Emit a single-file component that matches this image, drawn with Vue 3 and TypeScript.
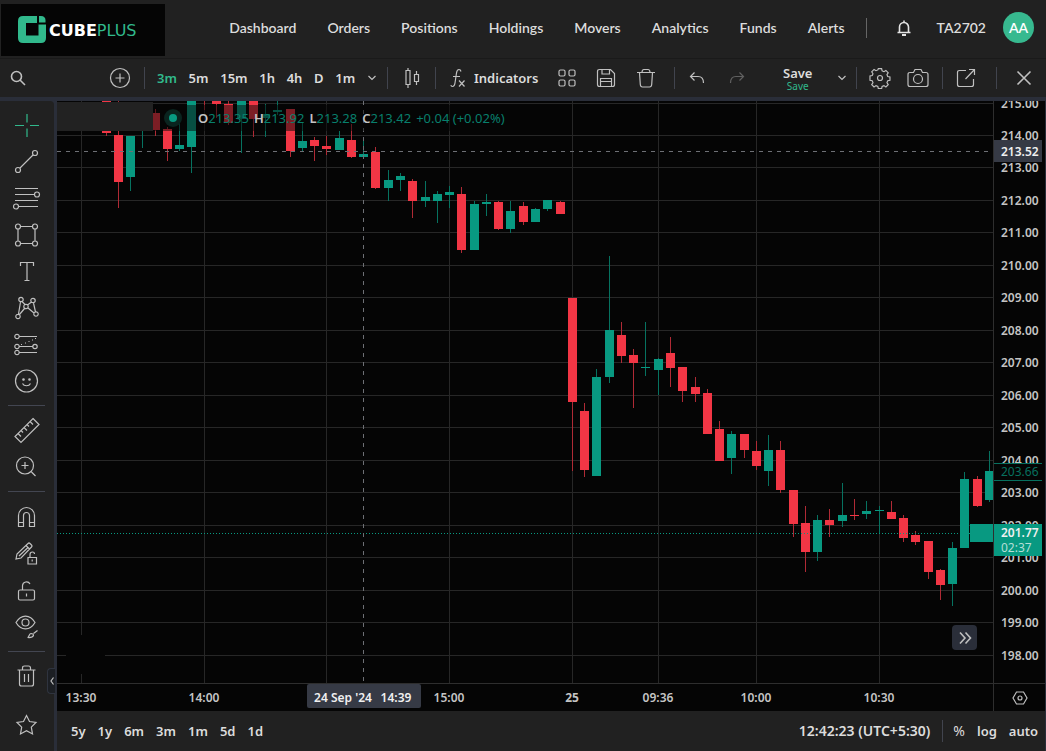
<script setup lang="ts">
import { ref } from 'vue'

type Dir = 'up' | 'down'
type Candle = [index: number, dir: Dir, high: number, top: number, bottom: number, low: number]

const circle = (x: number, y: number, r: number): string =>
  `M${x - r} ${y}a${r} ${r} 0 1 0 ${2 * r} 0a${r} ${r} 0 1 0 ${-2 * r} 0`

const navItems = ['Dashboard', 'Orders', 'Positions', 'Holdings', 'Movers', 'Analytics', 'Funds', 'Alerts']
const intervals = ['3m', '5m', '15m', '1h', '4h', 'D', '1m']
const ranges = ['5y', '1y', '6m', '3m', '1m', '5d', '1d']
const activeInterval = ref('3m')

interface Tool { name: string; d: string }
const toolGroups: Tool[][] = [
  [
    { name: 'Crosshair', d: 'M2 14.500h9M17 14.500h9M14 3v8.500M14 17.500v8.500' },
    { name: 'Trend line', d: circle(5, 22, 2.5) + circle(22, 5, 2.5) + 'M7 20L20 7' },
    { name: 'Fib retracement', d: 'M2 4.5h23M2 10.5h19.500M2 16.500h23M5.500 22.500h19.500' + circle(24, 10.5, 2.5) + circle(3, 22.5, 2.5) },
    { name: 'Shapes', d: circle(5, 5.5, 2.5) + circle(22, 5.5, 2.5) + circle(5, 22.5, 2.5) + circle(22, 22.5, 2.5) + 'M7.500 5.500h12M7.500 22.500h12M5 8v12M22 8v12' },
    { name: 'Text', d: 'M7.500 9V5.500h13V9M14 5.500v18M11.500 23.500h5' },
    { name: 'Patterns', d: circle(8, 5.5, 2.2) + circle(20, 6.5, 2.2) + circle(13, 12.5, 2.2) + circle(5, 22.5, 2.2) + circle(23, 20, 2.2) + 'M7.500 8L5.500 20M9 7.500l3 3M14.500 11l4-3M20.500 9l2 9M15 14l6 5M11.500 14.500L6.500 20.500' },
    { name: 'Projection', d: circle(4, 6.5, 2.2) + circle(4, 16.5, 2.2) + circle(22, 16.5, 2.2) + circle(4, 22.5, 2.2) + 'M6.500 6.500h17.500M6.500 16.500h13M6.500 22.500h17.500M8 14.500h1M12 13h1M15.500 11.500h1M19 10h1M22 8.500h1' },
    { name: 'Emoji', d: circle(13.5, 14, 11) + circle(10.5, 12.5, 0.7) + circle(16.5, 12.5, 0.7) + 'M9.500 16.500c1.500 3 6.500 3 8 0' },
  ],
  [
    { name: 'Measure', d: 'M20 2.500l6 6L8 26.500l-6-6zM17 5.500l3 3M14 8.500l2 2M11 11.500l3 3M8 14.500l2 2M5 17.500l3 3' },
    { name: 'Zoom in', d: circle(12, 12.5, 8.5) + 'M18.500 19l4 4M12 9v7M8.500 12.500h7' },
  ],
  [
    { name: 'Magnet', d: 'M5.500 23.500V12.500a8 8 0 0 1 16 0v11h-5V12.500a3 3 0 0 0-6 0v11zM5.500 19.500h5M16.500 19.500h5' },
    { name: 'Keep drawing', d: 'M3 19l1-5L15 3.500q1-1 2 0l1.500 1.500q1 1 0 2L8 18zM13 5.500l3.500 3.500M6 16L15 7.500M15 17.500h8.500v6.500H15zM17 17.500v-3q0-2.500 2.500-2.500q2 0 2 2M19.200 19.500v2' },
    { name: 'Lock drawings', d: 'M7 14h13q1.500 0 1.500 1.500v7q0 1.500-1.500 1.500H7q-1.500 0-1.500-1.500v-7q0-1.500 1.500-1.500zM9.500 14V9.500a4 4 0 0 1 7.500-1.500M13.500 17.500v3' },
    { name: 'Hide drawings', d: 'M3 9.500C8 1 17 1 22 9.500C17 18 8 18 3 9.500z' + circle(12.5, 9.5, 3.5) + 'M14.500 24.500c2 0 1-3.500 3.500-4q2.500 0 2.500 2q-1 2.500-6 2M20.500 20.500l4-3' },
  ],
]
const trashPath = 'M4.500 8h18M6.500 8v14q0 2 2 2h10q2 0 2-2V8M9.500 8V6q0-2 2-2h4q2 0 2 2v2M11.500 12v8M15.500 12v8'
const starPath = 'M13.500 4.500l3 6 6.500 1-4.700 4.700 1.200 6.800-6-3.200-6 3.200 1.200-6.800L4 11.500l6.500-1z'

/* Plot geometry: one bar every 12.27px, one rupee every 32.5px */
const barX = (i: number): number => Math.round(24 + i * 12.27)
const priceY = (p: number): number => Math.round(34 + (214 - p) * 32.48)
const prices = Array.from({ length: 18 }, (_, i) => 215 - i)
const timeMarks: { i: number; label: string; bold?: boolean }[] = [
  { i: 0, label: '13:30' },
  { i: 10, label: '14:00' },
  { i: 20, label: '' },
  { i: 30, label: '15:00' },
  { i: 40, label: '25', bold: true },
  { i: 47, label: '09:36' },
  { i: 55, label: '10:00' },
  { i: 65, label: '10:30' },
]

const candles: Candle[] = [
  [2, 'down', 0, 0, 32, 35], [3, 'down', 0, 34, 81, 107], [4, 'up', 35, 35, 76, 90], [5, 'up', 14, 14, 22, 47],
  [6, 'down', 8, 12, 29, 35], [7, 'down', 26, 28, 48, 60], [8, 'up', 17, 44, 48, 50], [9, 'up', 0, 0, 46, 72],
  [10, 'down', 0, 0, 0, 9], [11, 'down', 0, 0, 3, 17], [12, 'down', 0, 3, 22, 24], [13, 'up', 0, 0, 18, 52],
  [14, 'down', 0, 0, 18, 36], [15, 'up', 3, 13, 17, 36], [16, 'up', 0, 9, 11, 14], [17, 'down', 8, 8, 50, 56],
  [18, 'up', 21, 40, 47, 50], [19, 'down', 36, 39, 45, 60], [20, 'down', 35, 45, 48, 54], [21, 'up', 30, 37, 49, 49],
  [22, 'down', 23, 39, 56, 57], [23, 'up', 40, 53, 56, 56], [24, 'down', 46, 51, 87, 88], [25, 'up', 69, 79, 87, 100],
  [26, 'up', 72, 75, 79, 90], [27, 'down', 78, 80, 100, 117], [28, 'up', 80, 96, 100, 106], [29, 'up', 90, 93, 100, 122],
  [30, 'up', 85, 91, 94, 107], [31, 'down', 86, 93, 149, 152], [32, 'up', 100, 103, 149, 149], [33, 'up', 93, 101, 103, 115],
  [34, 'down', 100, 101, 128, 129], [35, 'up', 100, 110, 128, 132], [36, 'down', 101, 105, 121, 124], [37, 'up', 107, 108, 121, 121],
  [38, 'up', 99, 99, 108, 110], [39, 'down', 100, 101, 113, 113], [40, 'down', 197, 197, 301, 370], [41, 'down', 302, 310, 369, 376],
  [42, 'up', 268, 276, 375, 375], [43, 'up', 155, 229, 276, 282], [44, 'down', 221, 234, 255, 262], [45, 'down', 248, 254, 262, 307],
  [46, 'up', 221, 266, 267, 275], [47, 'up', 257, 258, 269, 294], [48, 'down', 236, 252, 267, 286], [49, 'down', 266, 266, 290, 301],
  [50, 'down', 276, 286, 293, 301], [51, 'down', 288, 292, 333, 333], [52, 'down', 320, 328, 360, 360], [53, 'up', 330, 333, 357, 373],
  [54, 'down', 333, 333, 349, 357], [55, 'down', 340, 350, 365, 369], [56, 'up', 334, 349, 370, 385], [57, 'down', 340, 349, 389, 392],
  [58, 'down', 389, 389, 423, 436], [59, 'down', 405, 422, 451, 471], [60, 'up', 414, 419, 451, 460], [61, 'down', 408, 419, 424, 436],
  [62, 'up', 382, 414, 420, 426], [63, 'down', 398, 414, 415, 419], [64, 'up', 400, 410, 413, 418], [65, 'up', 405, 409, 410, 432],
  [66, 'down', 400, 411, 418, 418], [67, 'down', 414, 417, 437, 441], [68, 'down', 430, 434, 441, 444], [69, 'down', 440, 440, 471, 478],
  [70, 'down', 468, 469, 484, 499], [71, 'up', 441, 447, 483, 505], [72, 'up', 371, 378, 447, 447], [73, 'down', 375, 378, 405, 406],
  [74, 'up', 350, 370, 399, 401],
]
</script>

<template>
  <div class="app">
    <header class="header">
      <a class="logo" href="#" aria-label="CubePlus home">
        <svg width="28" height="28" viewBox="0 0 28 28" aria-hidden="true">
          <path fill="#31b98c" fill-rule="evenodd" d="M5 0h14v7H8v12.500h12.500V8.500H28V22q0 5-5 5H5q-5 0-5-5V5q0-5 5-5z" />
          <path fill="#31b98c" d="M21 0h2q4.500 0 4.500 4.500V6.500H21z" />
        </svg>
        <span class="word"><b>CUBE</b>PLUS</span>
      </a>
      <nav class="nav">
        <a v-for="item in navItems" :key="item" href="#">{{ item }}</a>
      </nav>
      <span class="head-sep"></span>
      <button class="bell" aria-label="Notifications">
        <svg width="16" height="18" viewBox="0 0 16 18" fill="none" stroke="#e4e4e4" stroke-width="1.600">
          <path d="M1.500 13.500h13M3.500 13V8a4.500 4.500 0 0 1 9 0v5M8 1.500v2" />
          <path d="M6 16h4" stroke-width="2" />
        </svg>
      </button>
      <span class="user">TA2702</span>
      <button class="avatar">AA</button>
    </header>

    <div class="toolbar">
      <div class="sec sec-search">
        <button aria-label="Symbol search">
          <svg width="16" height="16" viewBox="0 0 16 16" class="ico thick"><path :d="circle(6.500, 6.500, 5) + 'M10.500 10.500l4.500 4.500'" /></svg>
        </button>
        <button aria-label="Compare symbol">
          <svg width="22" height="22" viewBox="0 0 22 22" class="ico"><path :d="circle(11, 11, 9.500) + 'M11 6.500v9M6.500 11h9'" /></svg>
        </button>
      </div>
      <div class="sec sec-intervals">
        <button
          v-for="t in intervals"
          :key="t"
          :class="{ active: t === activeInterval }"
          @click="activeInterval = t"
        >{{ t }}</button>
        <button aria-label="More intervals">
          <svg width="10" height="6" viewBox="0 0 10 6" class="ico"><path d="M1.500 1L5 4.500 8.500 1" /></svg>
        </button>
      </div>
      <div class="sec sec-type">
        <button aria-label="Chart type">
          <svg width="16" height="22" viewBox="0 0 16 22" class="ico"><path d="M2 3.500h4v14H2zM4 1v2.500M4 17.500V21M10.500 7.500h4v7h-4zM12.500 4v3.500M12.500 14.500V18" /></svg>
        </button>
      </div>
      <div class="sec sec-indicators">
        <button class="indicators">
          <svg width="16" height="20" viewBox="0 0 16 20" class="ico"><path d="M11 3.500Q10.500 1.500 9 1.500Q7 1.500 6.500 5L5 15Q4.500 18.500 2.500 18.500Q1 18.500 1 17M3 8.500h7M9 12.500l5.500 6M14.500 12.500L9 18.500" /></svg>
          Indicators
        </button>
        <button aria-label="Templates">
          <svg width="18" height="18" viewBox="0 0 18 18" class="ico">
            <rect x="1" y="1" width="6" height="6" rx="1.500" /><rect x="11" y="1" width="6" height="6" rx="1.500" />
            <rect x="1" y="11" width="6" height="6" rx="1.500" /><rect x="11" y="11" width="6" height="6" rx="1.500" />
          </svg>
        </button>
        <button aria-label="Save layout">
          <svg width="20" height="20" viewBox="0 0 20 20" class="ico"><path d="M3.500 1.500h11l4 4v11q0 2-2 2h-13q-2 0-2-2v-13q0-2 2-2zM6 1.500v4.500h7.500V1.500M4.500 18.500V10.500h11v8M4.500 13.500h11" /></svg>
        </button>
        <button aria-label="Remove all">
          <svg width="20" height="20" viewBox="0 0 20 20" class="ico"><path d="M1 4.500h18M6 4.500q0-3 2-3h4q2 0 2 3M3.500 4.500l.800 12q.2 2.500 2.200 2.500h7q2 0 2.200-2.500l.800-12" /></svg>
        </button>
      </div>
      <div class="sec sec-history">
        <button aria-label="Undo">
          <svg width="16" height="14" viewBox="0 0 16 14" class="ico"><path d="M5.500 1.500L1.500 5.500l4 4M1.500 5.500H9q5.500 0 5.500 6.500" /></svg>
        </button>
        <button aria-label="Redo" disabled>
          <svg width="16" height="14" viewBox="0 0 16 14" class="ico"><path d="M10.500 1.500l4 4-4 4M14.500 5.500H7q-5.500 0-5.500 6.500" /></svg>
        </button>
      </div>
      <div class="sec sec-save">
        <button class="save">Save<small>Save</small></button>
        <button aria-label="Manage layouts">
          <svg width="10" height="6" viewBox="0 0 10 6" class="ico"><path d="M1.500 1L5 4.500 8.500 1" /></svg>
        </button>
      </div>
      <div class="sec sec-view">
        <button aria-label="Settings">
          <svg width="22" height="22" viewBox="0 0 22 22" class="ico">
            <path d="M9.300 1.500h3.400l.5 2.300 1.900.8 2-1.300 2.400 2.400-1.300 2 .8 1.900 2.300.5v3.400l-2.300.5-.8 1.900 1.300 2-2.400 2.400-2-1.300-1.900.8-.5 2.300H9.300l-.5-2.300-1.900-.8-2 1.300-2.400-2.400 1.300-2-.8-1.900-2.300-.5V9.100L3 8.600l.8-1.900-1.300-2 2.400-2.400 2 1.300 1.900-.8z" transform="translate(.3 .2) scale(.97)" />
            <path :d="circle(11, 11, 2.500)" />
          </svg>
        </button>
        <button aria-label="Snapshot">
          <svg width="22" height="20" viewBox="0 0 22 20" class="ico"><path :d="'M3 4.500h3.500l1.500-3h6l1.500 3H19q2 0 2 2v10q0 2-2 2H3q-2 0-2-2v-10q0-2 2-2z' + circle(11, 11, 4.500)" /></svg>
        </button>
      </div>
      <div class="sec sec-open">
        <button aria-label="Open in new window">
          <svg width="20" height="20" viewBox="0 0 20 20" class="ico"><path d="M10 2.500H3.500q-2 0-2 2v12q0 2 2 2h12q2 0 2-2V11M13 1.500h5.500V7M18.500 1.500L9.500 11" /></svg>
        </button>
      </div>
      <div class="sec sec-close">
        <button aria-label="Close">
          <svg width="16" height="16" viewBox="0 0 16 16" class="ico thick"><path d="M1.500 1.500l13 13M14.500 1.500l-13 13" /></svg>
        </button>
      </div>
    </div>

    <div class="main">
      <aside class="sidebar">
        <div v-for="(group, g) in toolGroups" :key="g" class="group">
          <button v-for="(tool, k) in group" :key="tool.name" :aria-label="tool.name" :class="{ active: g === 0 && k === 0 }">
            <svg width="28" height="28" viewBox="0 0 28 28" class="ico"><path :d="tool.d" /></svg>
          </button>
        </div>
        <div class="group last">
          <button aria-label="Remove objects"><svg width="28" height="28" viewBox="0 0 28 28" class="ico"><path :d="trashPath" /></svg></button>
          <button aria-label="Favorites"><svg width="28" height="28" viewBox="0 0 28 28" class="ico"><path :d="starPath" /></svg></button>
        </div>
        <button class="collapse" aria-label="Hide toolbar">
          <svg width="4" height="8" viewBox="0 0 4 8" class="ico"><path d="M3.500 .5L1 4l2.500 3.500" /></svg>
        </button>
      </aside>

      <section class="chart">
        <div class="plot">
          <svg class="canvas" shape-rendering="crispEdges">
            <rect v-for="p in prices" :key="p" class="grid" x="0" :y="priceY(p)" width="100%" height="1" />
            <rect v-for="m in timeMarks" :key="m.i" class="grid" :x="barX(m.i)" y="0" width="1" height="100%" />
            <rect x="9" y="534" width="39" height="39" fill="#050505" />
            <g v-for="c in candles" :key="c[0]" :class="c[1]">
              <rect class="wick" :x="barX(c[0])" :y="c[2]" width="1" :height="c[5] - c[2]" />
              <rect class="body" :x="barX(c[0]) - 4" :y="c[3]" width="9" :height="c[4] - c[3]" />
            </g>
            <rect x="913" y="423" width="23" height="18" fill="#089981" />
            <line class="last-line" x1="0" y1="432" x2="100%" y2="432" />
            <line class="cross" x1="0" y1="50.500" x2="100%" y2="50.500" />
            <line class="cross" x1="306.500" y1="0" x2="306.500" y2="100%" />
          </svg>
          <div class="legend">
            <span class="legend-name"></span>
            <div class="legend-values">
              <span class="status"><i></i></span>
              <span><b>O</b>213.35</span>
              <span><b>H</b>213.92</span>
              <span><b>L</b>213.28</span>
              <span><b>C</b>213.42</span>
              <span>+0.04 (+0.02%)</span>
            </div>
          </div>
          <button class="scroll-end" aria-label="Scroll to latest bar">
            <svg width="14" height="14" viewBox="0 0 14 14" class="ico thick"><path d="M2 1.500L7 7l-5 5.500M7.500 1.500L12.500 7l-5 5.500" /></svg>
          </button>
        </div>
        <svg class="price-axis">
          <text v-for="p in prices" :key="p" x="7" :y="priceY(p) + 5">{{ p.toFixed(2) }}</text>
          <rect x="0" y="39" width="48" height="22" fill="#363a45" />
          <text x="7" y="55" class="lit">213.52</text>
          <rect x="0" y="362" width="48" height="18" fill="#050505" />
          <path d="M0 362.500h48M0 379.500h48" stroke="#07705f" />
          <text x="7" y="375" class="high">203.66</text>
          <rect x="0" y="423" width="48" height="32" fill="#089981" />
          <text x="7" y="436" class="lit">201.77</text>
          <text x="7" y="451" class="count">02:37</text>
        </svg>
        <svg class="time-axis">
          <text
            v-for="m in timeMarks"
            :key="m.i"
            :x="barX(m.i)"
            y="18"
            :class="{ strong: m.bold }"
          >{{ m.label }}</text>
          <rect x="250" y="0" width="114" height="24" rx="2" fill="#363a45" />
          <text x="286" y="18" class="lit">24 Sep '24</text>
          <text x="339" y="18" class="lit">14:39</text>
        </svg>
        <button class="axis-settings" aria-label="Axis settings">
          <svg width="16" height="14" viewBox="0 0 16 14" class="ico"><path :d="'M4.500 1h7L15 7l-3.500 6h-7L1 7z' + circle(8, 7, 2)" /></svg>
        </button>
        <footer class="bottom">
          <button v-for="r in ranges" :key="r">{{ r }}</button>
          <button class="clock">12:42:23 (UTC+5:30)</button>
          <span class="foot-sep"></span>
          <button class="percent">%</button>
          <button>log</button>
          <button>auto</button>
        </footer>
      </section>
    </div>
  </div>
</template>

<style>
body {
  margin: 0;
  background: #212121;
}
</style>

<style scoped>
.app {
  display: flex;
  flex-direction: column;
  min-height: 100vh;
  background: #2a2e39;
  color: #dcdcdc;
  font: 600 13px/16px 'Noto Sans', 'Open Sans', sans-serif;
}
button {
  padding: 0;
  border: 0;
  background: none;
  color: inherit;
  font: inherit;
  cursor: pointer;
}
a {
  color: inherit;
  text-decoration: none;
}
svg {
  display: block;
}
.ico {
  fill: none;
  stroke: #c0c0c0;
  stroke-width: 1.2;
}
.thick {
  stroke-width: 1.6;
}
.header {
  display: flex;
  align-items: center;
  box-sizing: border-box;
  height: 59px;
  padding: 0 12px 3px 1px;
  background: #212121;
  border-bottom: 1px solid #1a1a1a;
  font: 600 14px/18px Lato, 'Open Sans', sans-serif;
}
.logo {
  display: flex;
  align-items: center;
  gap: 3px;
  align-self: flex-end;
  box-sizing: border-box;
  width: 164px;
  height: 52px;
  margin-bottom: -1px;
  padding-left: 17px;
  background: #050505;
}
.word {
  padding-top: 2px;
  color: #31b98c;
  font: 16px/20px 'DejaVu Sans', sans-serif;
}
.word b {
  color: #fff;
}
.nav {
  display: flex;
  gap: 31px;
  margin-left: auto;
}
.head-sep {
  width: 1px;
  height: 20px;
  margin: 0 29px 0 21px;
  background: #666;
}
.user {
  margin: 0 17px 0 25px;
}
.avatar {
  width: 31px;
  height: 31px;
  border-radius: 50%;
  background: #37b98f;
  color: #fff;
}
.toolbar {
  display: flex;
  height: 38px;
  background: #212121;
}
.sec {
  display: flex;
  align-items: center;
  justify-content: space-between;
  box-sizing: border-box;
  position: relative;
}
.sec:not(:last-child)::after {
  content: '';
  position: absolute;
  right: 0;
  top: 8px;
  width: 1px;
  height: 22px;
  background: #41444e;
}
.sec-history::after {
  display: none;
}
.sec-search {
  width: 145px;
  padding: 0 14px 0 10px;
}
.sec-intervals {
  width: 243px;
  padding: 0 11px 0 12px;
}
.sec-type {
  width: 48px;
  justify-content: center;
}
.sec-indicators {
  width: 239px;
  padding: 0 19px 0 14px;
}
.indicators {
  display: flex;
  align-items: center;
  gap: 8px;
}
.sec-history {
  width: 70px;
  padding-left: 14px;
}
.sec-save {
  width: 74px;
  margin-left: auto;
  padding-right: 10px;
}
.save small {
  display: block;
  color: #31b98c;
  font: 10px/10px 'Noto Sans', sans-serif;
}
.sec-view {
  width: 86px;
  padding: 0 14px 0 12px;
}
.sec-open {
  width: 54px;
  padding-left: 13px;
}
.sec-close {
  width: 49px;
  padding-left: 19px;
}
button:disabled {
  opacity: 0.4;
}
.toolbar .active {
  color: #31b98c;
}
.main {
  display: flex;
  flex: 1;
  gap: 3px;
  margin-top: 4px;
}
.sidebar {
  position: relative;
  width: 54px;
  padding-top: 6px;
  box-sizing: border-box;
  background: #212121;
  border-top-right-radius: 4px;
}
.group {
  position: relative;
  display: flex;
  flex-direction: column;
  margin-bottom: 13px;
}
.group:nth-child(2) {
  margin-bottom: 14px;
}
.group button {
  display: flex;
  align-items: center;
  justify-content: center;
  height: 36px;
}
.group button:nth-child(2n) {
  height: 37px;
}
.group:not(.last)::after {
  content: '';
  position: absolute;
  bottom: -7px;
  left: 8px;
  width: 37px;
  height: 1px;
  background: #434651;
}
.group.last {
  gap: 12px;
  margin: 0;
}
.group .active .ico {
  stroke: #31b98c;
}
.collapse {
  position: absolute;
  top: 567px;
  right: -1px;
  display: flex;
  align-items: center;
  justify-content: center;
  width: 8px;
  height: 26px;
  border: 1px solid #2f343f;
  border-right: 0;
  border-radius: 4px 0 0 4px;
  background: #1c1f24;
}
.chart {
  display: grid;
  flex: 1;
  grid-template-columns: 1fr 52px;
  grid-template-rows: 1fr 28px 40px;
  min-width: 0;
  margin-right: 1px;
  background: #050505;
}
.plot {
  position: relative;
  min-width: 0;
  min-height: 400px;
}
.canvas {
  position: absolute;
  width: 100%;
  height: 100%;
}
.grid {
  fill: #272727;
}
.up .wick {
  fill: #067260;
}
.up .body {
  fill: #089981;
}
.down .wick {
  fill: #b02a35;
}
.down .body {
  fill: #f23645;
}
.last-line {
  stroke: #089981;
  stroke-dasharray: 1 2;
}
.cross {
  stroke: #6e7075;
  stroke-dasharray: 4 5;
}
.legend {
  position: absolute;
  top: 1px;
  left: 0;
  display: flex;
  align-items: flex-start;
}
.legend-name {
  width: 96px;
  height: 29px;
  background: #222;
}
.legend-values {
  display: flex;
  gap: 5px;
  align-items: center;
  height: 26px;
  margin-top: 3px;
  padding-left: 11px;
  background: rgba(5, 5, 5, 0.5);
  color: #087f6c;
  font: 13px/16px 'Noto Sans', sans-serif;
  white-space: nowrap;
}
.legend-values b {
  color: #c4c4c4;
  font-weight: 600;
}
.status {
  display: flex;
  align-items: center;
  justify-content: center;
  width: 18px;
  height: 18px;
  margin-right: 11px;
  border-radius: 50%;
  background: #0a241f;
}
.status i {
  width: 8px;
  height: 8px;
  border-radius: 50%;
  background: #089981;
}
.scroll-end {
  position: absolute;
  right: 16px;
  bottom: 33px;
  display: flex;
  align-items: center;
  justify-content: center;
  width: 25px;
  height: 25px;
  border-radius: 4px;
  background: #2a2e39;
}
.price-axis {
  width: 52px;
  height: 100%;
  overflow: hidden;
  box-sizing: border-box;
  border-left: 1px solid #2e2e2e;
}
.price-axis text,
.time-axis text {
  fill: #c4c4c4;
  font: 600 12px 'Noto Sans', sans-serif;
}
.price-axis .lit,
.time-axis .lit {
  fill: #f0f0f0;
}
.price-axis .high {
  fill: #07705f;
  font-weight: 400;
}
.price-axis .count {
  fill: #b5ded7;
  font-weight: 400;
}
.time-axis {
  width: 100%;
  height: 28px;
  border-top: 1px solid #2e2e2e;
  box-sizing: border-box;
}
.time-axis text {
  text-anchor: middle;
}
.time-axis .strong {
  font-weight: 700;
}
.axis-settings {
  display: flex;
  align-items: center;
  justify-content: center;
  border-top: 1px solid #2e2e2e;
  border-left: 1px solid #2e2e2e;
}
.bottom {
  grid-column: 1 / -1;
  display: flex;
  align-items: center;
  gap: 12px;
  padding: 0 7px 0 14px;
  background: #212121;
}
.clock {
  margin-left: auto;
  font-size: 14px;
}
.foot-sep {
  width: 1px;
  height: 22px;
  margin-right: -2px;
  background: #41444e;
}
.percent {
  font-size: 14px;
  font-weight: 400;
}
</style>
